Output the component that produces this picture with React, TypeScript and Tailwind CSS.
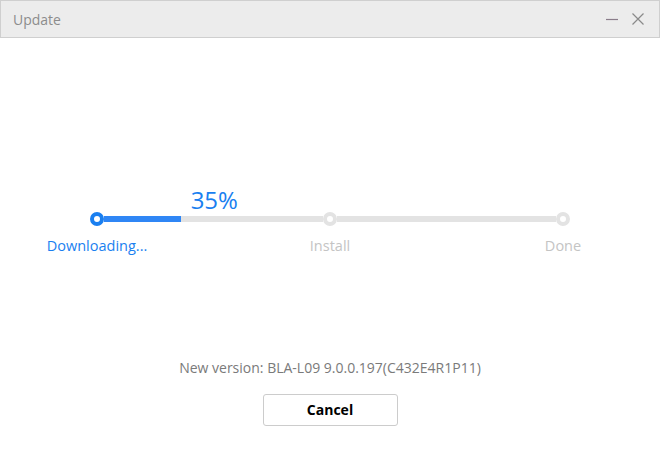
import React from 'react';

const font = { fontFamily: '"Open Sans", "Noto Sans", sans-serif' };

const steps = [
    { label: 'Downloading...', active: true },
    { label: 'Install', active: false },
    { label: 'Done', active: false },
];

const Node: React.FC<{ active: boolean }> = ({ active }) => (
    <div className={`w-[14px] h-[14px] rounded-full bg-white border-[4px] shrink-0 ${active ? 'border-[#1a7ff0]' : 'border-[#e3e3e3]'}`} />
);

const App: React.FC = () => {
    const progress = 35;

    return (
        <div className="w-[660px] h-[455px] bg-white flex flex-col" style={font}>
            <div className="h-[38px] bg-[#ececec] border border-[#cfcfcf] flex items-center pl-[12px] pr-[14px]">
                <span className="text-[14px] text-[#8c8c8c]">Update</span>
                <div className="ml-auto flex items-center gap-[12px]">
                    <svg width="14" height="14" viewBox="0 0 14 14">
                        <path d="M1 7.5 H13" stroke="#8a7d8a" strokeWidth="1.2" />
                    </svg>
                    <svg width="14" height="14" viewBox="0 0 14 14">
                        <path d="M1.5 1.5 L12.5 12.5 M12.5 1.5 L1.5 12.5" stroke="#8a8a8a" strokeWidth="1.2" />
                    </svg>
                </div>
            </div>

            <div className="mt-[174px] px-[90px]">
                <div className="flex items-center">
                    <Node active />
                    <div className="flex-1 h-[6px] bg-[#e3e3e3] relative">
                        <div className="h-full bg-[#2f86f5]" style={{ width: `${progress}%` }} />
                        <span className="absolute bottom-[10px] text-[24px] leading-none text-[#1a7ff0]" style={{ left: `calc(${progress}% + 10px)` }}>{progress}%</span>
                    </div>
                    <Node active={false} />
                    <div className="flex-1 h-[6px] bg-[#e3e3e3]" />
                    <Node active={false} />
                </div>
                <div className="flex justify-between mt-[9px] px-[7px]">
                    {steps.map(s => (
                        <div key={s.label} className="w-0 flex justify-center">
                            <span className={`whitespace-nowrap text-[14.5px] ${s.active ? 'text-[#1a7ff0]' : 'text-[#c4c4c4]'}`}>{s.label}</span>
                        </div>
                    ))}
                </div>
            </div>

            <div className="mt-[100px] flex flex-col items-center">
                <span className="text-[14px] text-[#7a7a7a]">New version: BLA-L09 9.0.0.197(C432E4R1P11)</span>
                <button className="mt-[16px] w-[135px] h-[32px] border border-[#cccccc] rounded-[3px] bg-white text-[14px] font-bold text-black">Cancel</button>
            </div>
        </div>
    );
};

export default App;
